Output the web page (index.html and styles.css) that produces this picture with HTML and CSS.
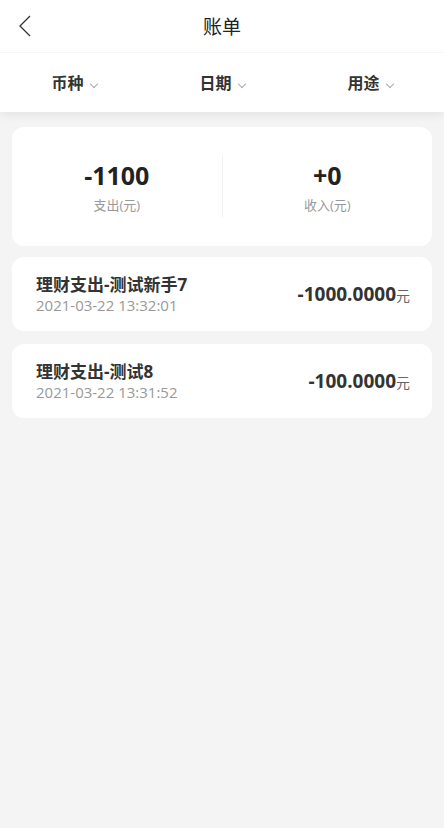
FILE: index.html
```html
<!DOCTYPE html>
<html lang="zh-CN">
<head>
    <meta charset="UTF-8">
    <meta name="viewport" content="width=device-width, initial-scale=1.0">
    <title>账单</title>
    <link rel="stylesheet" href="styles.css">
</head>
<body>
    <div class="header">
        <span class="back-btn">
            <svg width="14" height="22" viewBox="0 0 14 22"><path d="M12 1 L2 11 L12 21" fill="none" stroke="#333" stroke-width="1.3"/></svg>
        </span>
        <h1>账单</h1>
    </div>

    <div class="filter-bar">
        <div class="filter-item">币种<span class="arrow"></span></div>
        <div class="filter-item">日期<span class="arrow"></span></div>
        <div class="filter-item">用途<span class="arrow"></span></div>
    </div>

    <div class="content">
        <div class="summary card">
            <div class="summary-col">
                <div class="summary-num">-1100</div>
                <div class="summary-label">支出(元)</div>
            </div>
            <div class="summary-col">
                <div class="summary-num">+0</div>
                <div class="summary-label">收入(元)</div>
            </div>
        </div>

        <div class="bill card">
            <div class="bill-info">
                <div class="bill-title">理财支出-测试新手7</div>
                <div class="bill-date">2021-03-22 13:32:01</div>
            </div>
            <div class="bill-amount">-1000.0000<span class="unit">元</span></div>
        </div>

        <div class="bill card">
            <div class="bill-info">
                <div class="bill-title">理财支出-测试8</div>
                <div class="bill-date">2021-03-22 13:31:52</div>
            </div>
            <div class="bill-amount">-100.0000<span class="unit">元</span></div>
        </div>
    </div>
</body>
</html>
```

FILE: styles.css
```css
* {
    box-sizing: border-box;
}

html, body {
    margin: 0;
    padding: 0;
    min-height: 100%;
    background-color: #f4f4f4;
    font-family: "Open Sans", "Noto Sans CJK SC", sans-serif;
    color: #333;
}

.header {
    position: relative;
    height: 53px;
    background: #fff;
    display: flex;
    align-items: center;
    justify-content: center;
    border-bottom: 1px solid #f6f6f6;
}

.header h1 {
    margin: 0;
    font-size: 19px;
    font-weight: normal;
    color: #222;
}

.back-btn {
    position: absolute;
    left: 18px;
    top: 15px;
    display: flex;
}

.filter-bar {
    display: flex;
    height: 59px;
    background: #fff;
    box-shadow: 0 4px 8px rgba(0, 0, 0, 0.06);
}

.filter-item {
    flex: 1;
    display: flex;
    align-items: center;
    justify-content: center;
    font-size: 16px;
    font-weight: bold;
    color: #333;
    padding-bottom: 2px;
}

.arrow {
    width: 6px;
    height: 6px;
    margin-left: 7px;
    margin-top: 4px;
    border-right: 1.5px solid #aaa;
    border-bottom: 1.5px solid #aaa;
    transform: rotate(45deg);
}

.content {
    padding: 15px 12px;
}

.card {
    background: #fff;
    border-radius: 12px;
    margin-bottom: 13px;
}

.summary {
    display: flex;
    align-items: center;
    height: 119px;
    margin-bottom: 11px;
}

.summary-col {
    flex: 1;
    text-align: center;
    padding: 2px 0;
}

.summary-col + .summary-col {
    border-left: 1px solid #f0f0f0;
}

.summary-num {
    font-size: 25px;
    font-weight: bold;
    line-height: 34px;
    color: #222;
}

.summary-label {
    margin-top: 3px;
    font-size: 13px;
    color: #999;
    line-height: 20px;
}

.bill {
    display: flex;
    align-items: center;
    justify-content: space-between;
    height: 74px;
    padding: 0 22px 0 24px;
}

.bill-title {
    font-size: 17px;
    font-weight: bold;
    line-height: 22px;
    color: #333;
}

.bill-date {
    font-size: 15px;
    color: #999;
    line-height: 19px;
}

.bill-amount {
    font-size: 19px;
    font-weight: bold;
    color: #333;
}

.unit {
    font-size: 14px;
    font-weight: normal;
    color: #666;
}
```
